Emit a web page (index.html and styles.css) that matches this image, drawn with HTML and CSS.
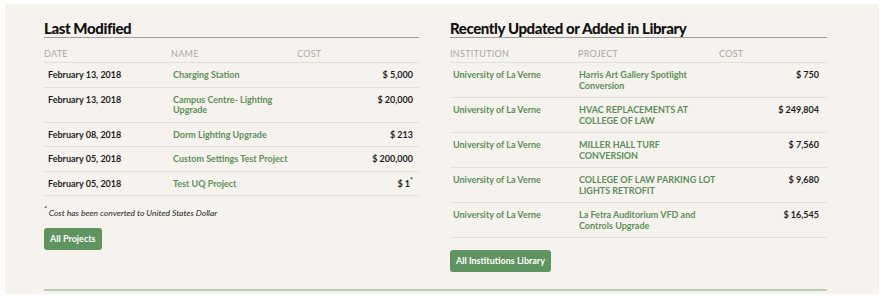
FILE: index.html
```html
<!DOCTYPE html>
<html lang="en">
<head>
<meta charset="UTF-8">
<meta name="viewport" content="width=device-width, initial-scale=1.0">
<title>Dashboard - Recent Projects</title>
<link rel="stylesheet" href="styles.css">
</head>
<body>
  <section class="panel">
    <div class="columns">
      <div class="block block-left">
        <h2>Last Modified</h2>
        <table class="list">
          <colgroup>
            <col style="width: 127px">
            <col style="width: 126px">
            <col>
          </colgroup>
          <thead>
            <tr><th>Date</th><th>Name</th><th>Cost</th></tr>
          </thead>
          <tbody>
            <tr><td class="plain">February 13, 2018</td><td><a href="#">Charging Station</a></td><td class="cost">$ 5,000</td></tr>
            <tr><td class="plain">February 13, 2018</td><td><a href="#">Campus Centre- Lighting<br>Upgrade</a></td><td class="cost">$ 20,000</td></tr>
            <tr><td class="plain">February 08, 2018</td><td><a href="#">Dorm Lighting Upgrade</a></td><td class="cost">$ 213</td></tr>
            <tr><td class="plain">February 05, 2018</td><td><a href="#">Custom Settings Test Project</a></td><td class="cost">$ 200,000</td></tr>
            <tr><td class="plain">February 05, 2018</td><td><a href="#">Test UQ Project</a></td><td class="cost">$ 1<sup>*</sup></td></tr>
          </tbody>
        </table>
        <p class="note"><sup>*</sup> Cost has been converted to United States Dollar</p>
        <a class="btn" href="#">All Projects</a>
      </div>

      <div class="block block-right">
        <h2>Recently Updated or Added in Library</h2>
        <table class="list">
          <colgroup>
            <col style="width: 128px">
            <col style="width: 141px">
            <col>
          </colgroup>
          <thead>
            <tr><th>Institution</th><th>Project</th><th>Cost</th></tr>
          </thead>
          <tbody>
            <tr><td><a href="#">University of La Verne</a></td><td><a href="#">Harris Art Gallery Spotlight<br>Conversion</a></td><td class="cost">$ 750</td></tr>
            <tr><td><a href="#">University of La Verne</a></td><td><a href="#">HVAC REPLACEMENTS AT<br>COLLEGE OF LAW</a></td><td class="cost">$ 249,804</td></tr>
            <tr><td><a href="#">University of La Verne</a></td><td><a href="#">MILLER HALL TURF<br>CONVERSION</a></td><td class="cost">$ 7,560</td></tr>
            <tr><td><a href="#">University of La Verne</a></td><td><a href="#">COLLEGE OF LAW PARKING LOT<br>LIGHTS RETROFIT</a></td><td class="cost">$ 9,680</td></tr>
            <tr><td><a href="#">University of La Verne</a></td><td><a href="#">La Fetra Auditorium VFD and<br>Controls Upgrade</a></td><td class="cost">$ 16,545</td></tr>
          </tbody>
        </table>
        <a class="btn" href="#">All Institutions Library</a>
      </div>
    </div>
    <div class="divider"></div>
  </section>
</body>
</html>
```

FILE: styles.css
```css
:root {
  --panel: #f6f3ee;
  --green: #5f935f;
  --link: #5b8f5a;
  --text: #1e1e1e;
  --muted: #a8a8a8;
  --rule: #e3e0da;
}

* {
  margin: 0;
  padding: 0;
  box-sizing: border-box;
}

body {
  font-family: 'Lato', sans-serif;
  background: #fff;
  color: var(--text);
}

.panel {
  margin: 4px 5px 0;
  height: 290px;
  background: var(--panel);
  padding: 16px 52px 0 39px;
}

.columns {
  display: grid;
  grid-template-columns: 375px 1fr;
  gap: 31px;
  align-items: start;
}

.block h2 {
  font-size: 15px;
  line-height: 17px;
  font-weight: 900;
  color: #111;
  letter-spacing: -0.4px;
  border-bottom: 1px solid #9c9c9c;
}

.list {
  width: 100%;
  border-collapse: collapse;
  table-layout: fixed;
  font-size: 9px;
}

.list th {
  text-align: left;
  font-weight: 400;
  text-transform: uppercase;
  color: var(--muted);
  letter-spacing: 0.3px;
  line-height: 11px;
  padding: 10px 0 3px;
  border-bottom: 1px solid var(--rule);
}

.list td {
  font-weight: 700;
  line-height: 10.5px;
  padding: 7px 0 6px;
  vertical-align: top;
  border-bottom: 1px solid var(--rule);
}

.block-left td:first-child {
  padding-left: 4px;
}

.block-left td:nth-child(2) {
  padding-left: 2px;
}

.block-right td:first-child {
  padding-left: 3px;
}

.block-right td:nth-child(2) {
  padding-left: 1px;
}

.list td.cost {
  text-align: right;
  padding-right: 6px;
}

.block-right td.cost {
  padding-right: 8px;
}

.list a {
  color: var(--link);
  text-decoration: none;
}

.list sup,
.note sup {
  font-size: 7px;
  line-height: 0;
  vertical-align: 4px;
}

.note {
  font-size: 8.5px;
  font-style: italic;
  line-height: 11px;
  margin-top: 12px;
}

.btn {
  display: inline-block;
  margin-top: 9px;
  height: 22px;
  line-height: 22px;
  padding: 0 6px;
  border-radius: 3px;
  background: var(--green);
  color: #fff;
  font-size: 9px;
  font-weight: 700;
  text-decoration: none;
}

.block-right .btn {
  margin-top: 12px;
}

.divider {
  margin-top: 17px;
  height: 2px;
  background: #bccfb5;
}
```
